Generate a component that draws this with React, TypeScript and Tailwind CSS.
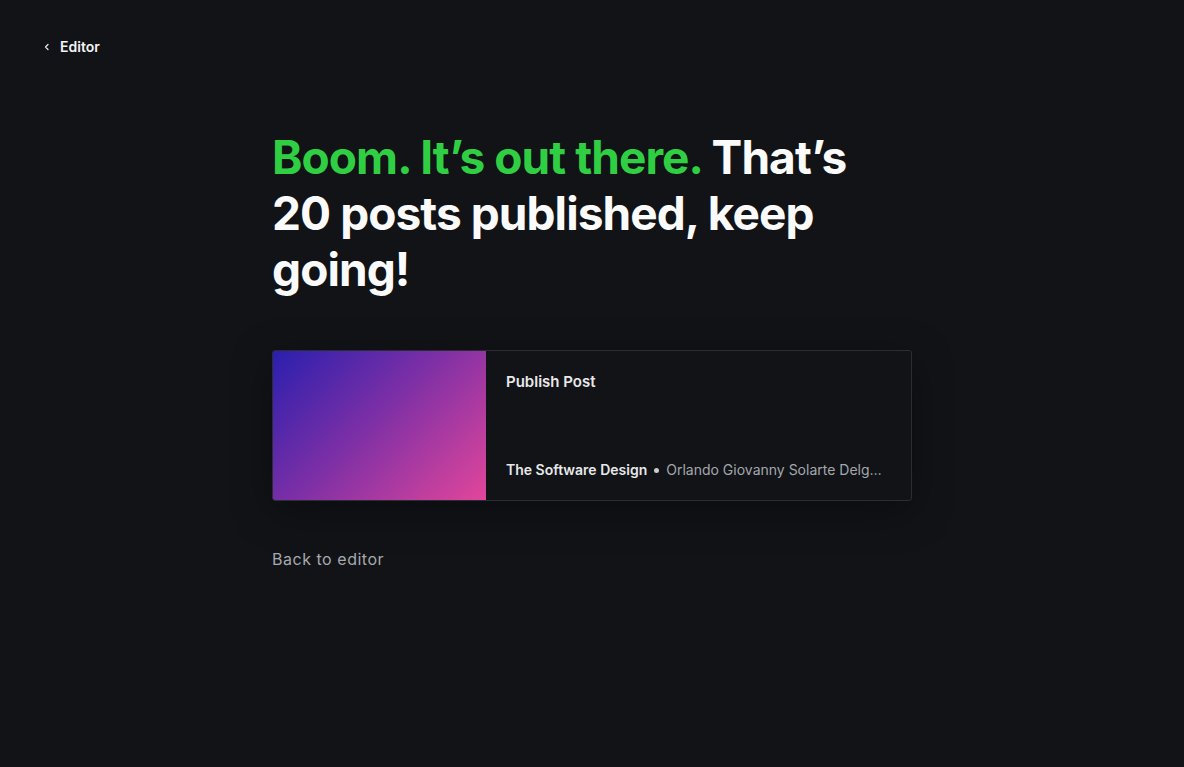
import React from "react";

export default function App() {
  return (
    <div
      className="min-h-screen w-full bg-[#111317] text-white"
      style={{ fontFamily: "Inter, 'Noto Sans', sans-serif" }}
    >
      <div className="flex items-center gap-[9px] pl-[43px] pt-[35px] h-[58px]">
        <svg width="8" height="8" viewBox="0 0 8 8" className="mt-[1px]">
          <path d="M5 1.5 L2.5 4 L5 6.5" fill="none" stroke="#e6e6e6" strokeWidth="1.3" strokeLinecap="round" strokeLinejoin="round" />
        </svg>
        <span className="text-[14px] font-semibold text-[#f3f3f3]">Editor</span>
      </div>

      <div className="w-[640px] ml-[272px] mt-[71px]">
        <h1 className="max-w-[590px] text-[46px] leading-[56px] font-bold tracking-[-0.02em] text-[#fafafa]">
          <span className="text-[#30cf43]">Boom. It’s out there.</span> That’s 20 posts published, keep going!
        </h1>

        <div className="mt-[53px] flex h-[151px] w-[640px] overflow-hidden rounded-[3px] border border-[#2b2d33] bg-[#111317] shadow-[0_10px_40px_rgba(0,0,0,0.35)]">
          <div className="w-[213px] shrink-0 bg-[linear-gradient(135deg,#2a1fae_0%,#7a2fa6_45%,#e2469a_100%)]" />
          <div className="flex min-w-0 flex-1 flex-col justify-between px-[20px] pt-[21px] pb-[21px]">
            <div className="text-[15px] font-semibold leading-[20px] text-[#e8e8ea]">Publish Post</div>
            <div className="flex items-center text-[14px] leading-[18px] whitespace-nowrap">
              <span className="font-semibold text-[#e8e8ea]">The Software Design</span>
              <span className="mx-[7px] h-[5px] w-[5px] rounded-full bg-[#c9cbcf] shrink-0" />
              <span className="truncate text-[#a4a8ae] max-w-[221px]">Orlando Giovanny Solarte Delgado</span>
            </div>
          </div>
        </div>

        <div className="mt-[48px] text-[16px] leading-[20px] tracking-[0.033em] text-[#a6a9ae]">Back to editor</div>
      </div>
    </div>
  );
}
